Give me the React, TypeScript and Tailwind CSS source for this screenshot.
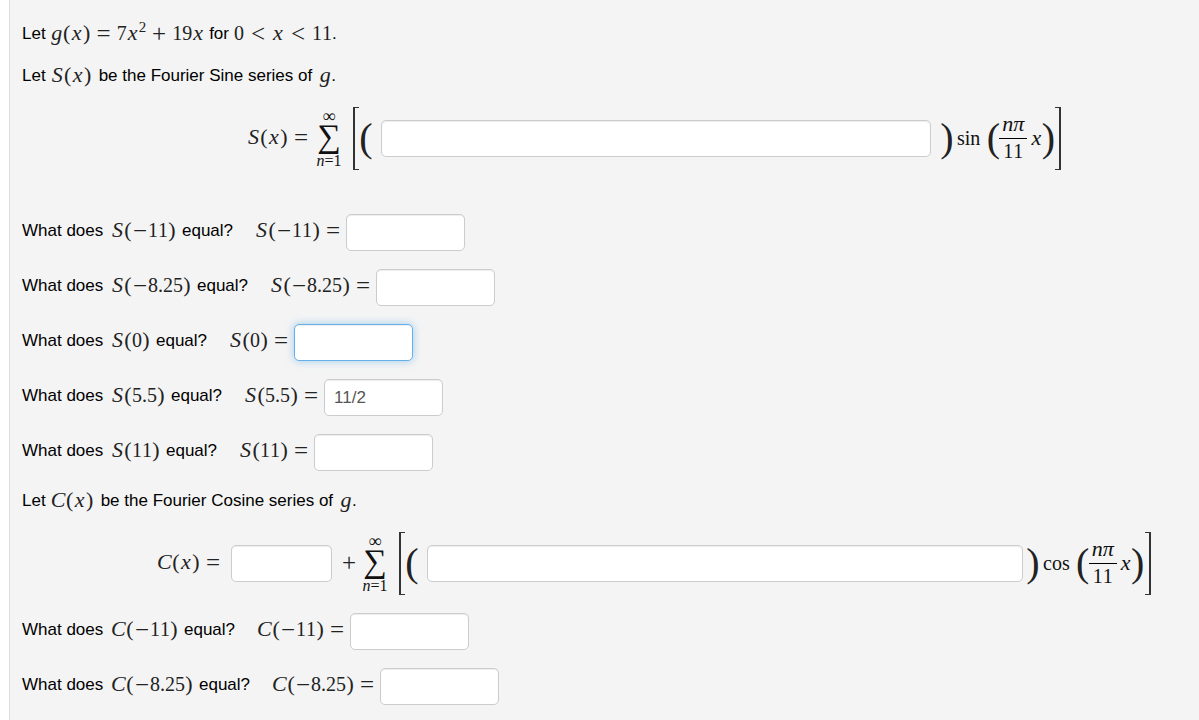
import type { ReactNode } from "react";

const serif = "font-['Liberation_Serif',serif] [font-kerning:none]";

function Letter({ children }: { children: ReactNode }) {
  return <i className="inline-block min-w-[12px] text-center text-[22px]">{children}</i>;
}

function Op({ children }: { children: ReactNode }) {
  return <span className="inline-block w-4 self-center text-center text-[25px] leading-6">{children}</span>;
}

function Paren({ children }: { children: ReactNode }) {
  return <span className="inline-block w-2 text-center text-[22px]">{children}</span>;
}

function Math({ children }: { children: ReactNode }) {
  return (
    <span className={`${serif} inline-flex h-6 items-baseline whitespace-nowrap text-[20px] leading-[22px] text-[#222]`}>
      {children}
    </span>
  );
}

function Call({ fn, arg }: { fn: string; arg: string }) {
  const negative = arg.startsWith("-");
  const body = negative ? arg.slice(1) : arg;
  return (
    <Math>
      <i className={fn === "C" ? "inline-block w-[15px] text-[22px]" : "inline-block w-[13px] text-center text-[22px]"}>{fn}</i>
      <Paren>(</Paren>
      {negative && <Op>−</Op>}
      {body === "x" ? <Letter>x</Letter> : <span>{body}</span>}
      <Paren>)</Paren>
    </Math>
  );
}

const field = "h-[37px] min-w-0 rounded-[5px] border bg-white px-[9px] text-[17px] text-[#555] outline-none";
const idle = "border-[#ccc] shadow-[inset_0_1px_1px_rgba(0,0,0,0.075)]";
const focused = "border-[#66afe9] shadow-[inset_0_1px_1px_rgba(0,0,0,0.075),0_0_8px_rgba(102,175,233,0.6)]";

function Question({ fn, arg, value = "", active = false }: { fn: string; arg: string; value?: string; active?: boolean }) {
  const id = `${fn}${arg}`;
  return (
    <div className="flex h-[55px] items-center">
      <label htmlFor={id} className="flex items-center pb-1">
        <span className="w-[89px]">What does</span>
        <Call fn={fn} arg={arg} />
        <span className="ml-[6px] mr-[22px]">equal?</span>
        <Call fn={fn} arg={arg} />
        <span className="mx-[5px] flex">
          <Math><Op>=</Op></Math>
        </span>
      </label>
      <input id={id} type="text" defaultValue={value} className={`${field} w-[119px] ${active ? focused : idle}`} />
    </div>
  );
}

function BigParen({ children }: { children: ReactNode }) {
  return <span className={`${serif} flex h-[38px] w-3 items-center justify-center text-[40px] leading-[38px] text-[#222]`}>{children}</span>;
}

function Sum() {
  return (
    <span className={`${serif} flex w-[30px] flex-col items-center pt-1 text-[#111]`}>
      <span className="text-[18px] leading-[8px]">∞</span>
      <span className="text-[33px] leading-8">∑</span>
      <span className="mt-px whitespace-nowrap text-[16px] leading-4"><i>n</i>=1</span>
    </span>
  );
}

function Term({ trig }: { trig: string }) {
  return (
    <span className={`${serif} flex items-center text-[20px] leading-6 text-[#111]`}>
      <span className="mr-[7px]">{trig}</span>
      <BigParen>(</BigParen>
      <span className="flex w-7 flex-col items-center">
        <span className="flex h-[21px] w-full items-center justify-center border-b border-black pb-[7px] text-[22px] italic">nπ</span>
        <span className="h-5 leading-6">11</span>
      </span>
      <span className="ml-[3px] flex w-3"><Letter>x</Letter></span>
      <BigParen>)</BigParen>
    </span>
  );
}

function Bracketed({ children }: { children: ReactNode }) {
  return (
    <span className="flex h-[63px] min-w-0 items-center gap-[1px]">
      <span className="h-full w-[6px] shrink-0 border-y border-l-2 border-[#333]" />
      {children}
      <span className="h-full w-[6px] shrink-0 border-y border-r-2 border-[#333]" />
    </span>
  );
}

export default function App() {
  return (
    <div className="bg-white pl-[9px] font-['Liberation_Sans',Arial,sans-serif] text-[17px] leading-6 text-black">
      <main className="min-h-screen border-l border-[#ddd] bg-[#f4f4f4] pl-3 pt-[13px]">
        <p className="flex h-[42px] items-center">
          <span className="mr-[5px]">Let</span>
          <Math>
            <Letter>g</Letter><Paren>(</Paren><Letter>x</Letter><Paren>)</Paren>
            <span className="mx-[5px] flex self-center"><Op>=</Op></span>
            7<Letter>x</Letter><sup className="top-[-8px] text-[15px] leading-none">2</sup>
            <span className="mx-[5px] flex self-center"><Op>+</Op></span>
            19<Letter>x</Letter>
          </Math>
          <span className="mx-[5px]">for</span>
          <Math>
            0<span className="mx-[6px] flex self-center"><Op>&lt;</Op></span><Letter>x</Letter>
            <span className="mx-[6px] flex self-center"><Op>&lt;</Op></span>11
          </Math>
          <span>.</span>
        </p>
        <p className="flex h-[42px] items-center">
          <span className="mr-[5px]">Let</span>
          <Call fn="S" arg="x" />
          <span className="mx-[7px]">be the Fourier Sine series of</span>
          <Math><Letter>g</Letter></Math>.
        </p>

        <div className="mb-[26px] flex h-[82px] items-center pl-[225px]">
          <Call fn="S" arg="x" />
          <span className="mx-[5px] flex"><Math><Op>=</Op></Math></span>
          <Sum />
          <span className="w-[9px]" />
          <Bracketed>
            <BigParen>(</BigParen>
            <input aria-label="Sine series coefficient" type="text" className={`${field} ${idle} ml-2 mr-[9px] w-[550px]`} />
            <BigParen>)</BigParen>
            <span className="w-[2px]" />
            <Term trig="sin" />
          </Bracketed>
        </div>

        <Question fn="S" arg="-11" />
        <Question fn="S" arg="-8.25" />
        <Question fn="S" arg="0" active />
        <Question fn="S" arg="5.5" value="11/2" />
        <Question fn="S" arg="11" />

        <p className="flex h-[42px] items-center">
          <span className="mr-[5px]">Let</span>
          <Call fn="C" arg="x" />
          <span className="mx-[7px]">be the Fourier Cosine series of</span>
          <Math><Letter>g</Letter></Math>.
        </p>

        <div className="flex h-[82px] items-center pl-[135px]">
          <Call fn="C" arg="x" />
          <span className="mx-[5px] flex"><Math><Op>=</Op></Math></span>
          <input aria-label="Cosine series constant" type="text" className={`${field} ${idle} ml-[5px] mr-1 w-[101px]`} />
          <span className="ml-[5px] mr-[3px] flex"><Math><Op>+</Op></Math></span>
          <Sum />
          <span className="w-[9px]" />
          <Bracketed>
            <BigParen>(</BigParen>
            <input aria-label="Cosine series coefficient" type="text" className={`${field} ${idle} ml-2 mr-[3px] w-[596px]`} />
            <BigParen>)</BigParen>
            <span className="w-[2px]" />
            <Term trig="cos" />
          </Bracketed>
        </div>

        <Question fn="C" arg="-11" />
        <Question fn="C" arg="-8.25" />
      </main>
    </div>
  );
}
